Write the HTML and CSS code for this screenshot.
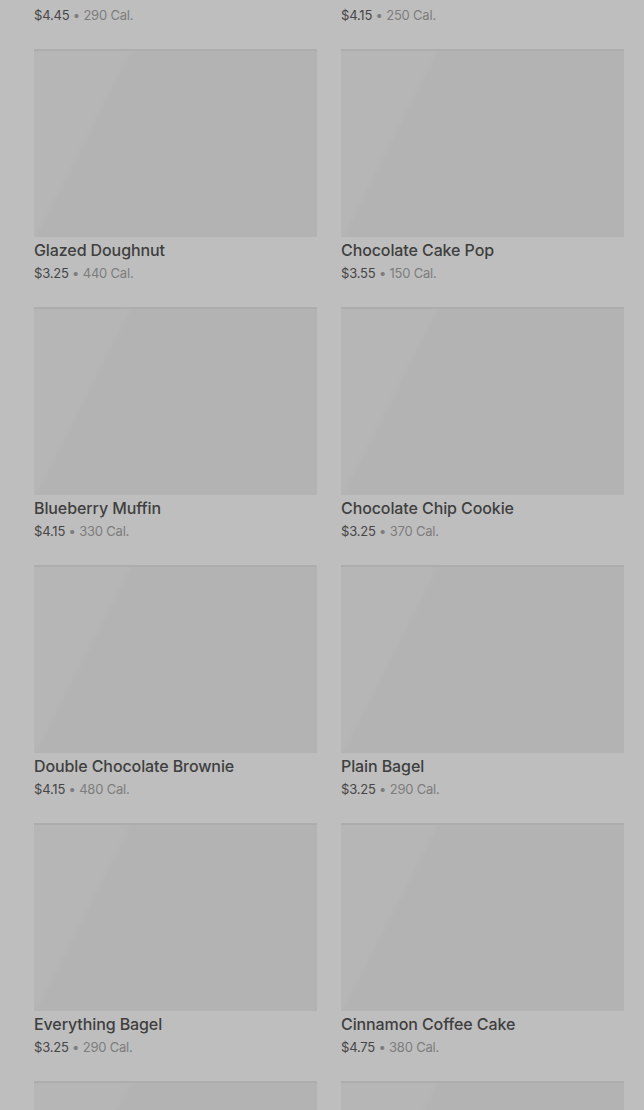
FILE: index.html
```html
<!DOCTYPE html>
<html>
<head>
<meta charset="utf-8">
<link rel="stylesheet" href="styles.css">
</head>
<body>
<main class="menu">
  <div class="grid">
    <div class="card card--clipped"><p class="meta"><span class="price">$4.45</span><span class="cal"> • 290 Cal.</span></p></div>
    <div class="card card--clipped"><p class="meta"><span class="price">$4.15</span><span class="cal"> • 250 Cal.</span></p></div>

    <div class="card"><div class="thumb"></div><h3 class="name">Glazed Doughnut</h3><p class="meta"><span class="price">$3.25</span><span class="cal"> • 440 Cal.</span></p></div>
    <div class="card"><div class="thumb"></div><h3 class="name">Chocolate Cake Pop</h3><p class="meta"><span class="price">$3.55</span><span class="cal"> • 150 Cal.</span></p></div>

    <div class="card"><div class="thumb"></div><h3 class="name">Blueberry Muffin</h3><p class="meta"><span class="price">$4.15</span><span class="cal"> • 330 Cal.</span></p></div>
    <div class="card"><div class="thumb"></div><h3 class="name">Chocolate Chip Cookie</h3><p class="meta"><span class="price">$3.25</span><span class="cal"> • 370 Cal.</span></p></div>

    <div class="card"><div class="thumb"></div><h3 class="name">Double Chocolate Brownie</h3><p class="meta"><span class="price">$4.15</span><span class="cal"> • 480 Cal.</span></p></div>
    <div class="card"><div class="thumb"></div><h3 class="name">Plain Bagel</h3><p class="meta"><span class="price">$3.25</span><span class="cal"> • 290 Cal.</span></p></div>

    <div class="card"><div class="thumb"></div><h3 class="name">Everything Bagel</h3><p class="meta"><span class="price">$3.25</span><span class="cal"> • 290 Cal.</span></p></div>
    <div class="card"><div class="thumb"></div><h3 class="name">Cinnamon Coffee Cake</h3><p class="meta"><span class="price">$4.75</span><span class="cal"> • 380 Cal.</span></p></div>

    <div class="card"><div class="thumb"></div></div>
    <div class="card"><div class="thumb"></div></div>
  </div>
</main>
</body>
</html>
```
FILE: styles.css
```css
html, body {
  margin: 0;
  padding: 0;
  background: #bebebe;
  overflow: hidden;
}
body {
  height: 1110px;
  font-family: Inter, Roboto, "Noto Sans", "Liberation Sans", sans-serif;
}
.menu {
  padding: 5px 20px 0 34px;
}
.grid {
  display: grid;
  grid-template-columns: 1fr 1fr;
  column-gap: 24px;
  row-gap: 24px;
}
.card {
  display: flex;
  flex-direction: column;
}
.thumb {
  height: 188px;
  border-top: 2px solid #adadad;
  box-sizing: border-box;
  background: linear-gradient(117deg, #b6b6b6 0, #b6b6b6 83px, #b3b3b3 89px, #b3b3b3 100%);
}
.name {
  margin: 1px 0 0;
  font-size: 16px;
  line-height: 24px;
  font-weight: 500;
  color: #3f3f3f;
  letter-spacing: -0.1px;
}
.meta {
  margin: 1px 0 0;
  font-size: 13px;
  line-height: 20px;
  color: #7b7b7b;
  letter-spacing: -0.2px;
}
.card--clipped .meta {
  margin: 0;
}
.price {
  color: #464646;
}
.cal {
  color: #7d7d7d;
}
```
